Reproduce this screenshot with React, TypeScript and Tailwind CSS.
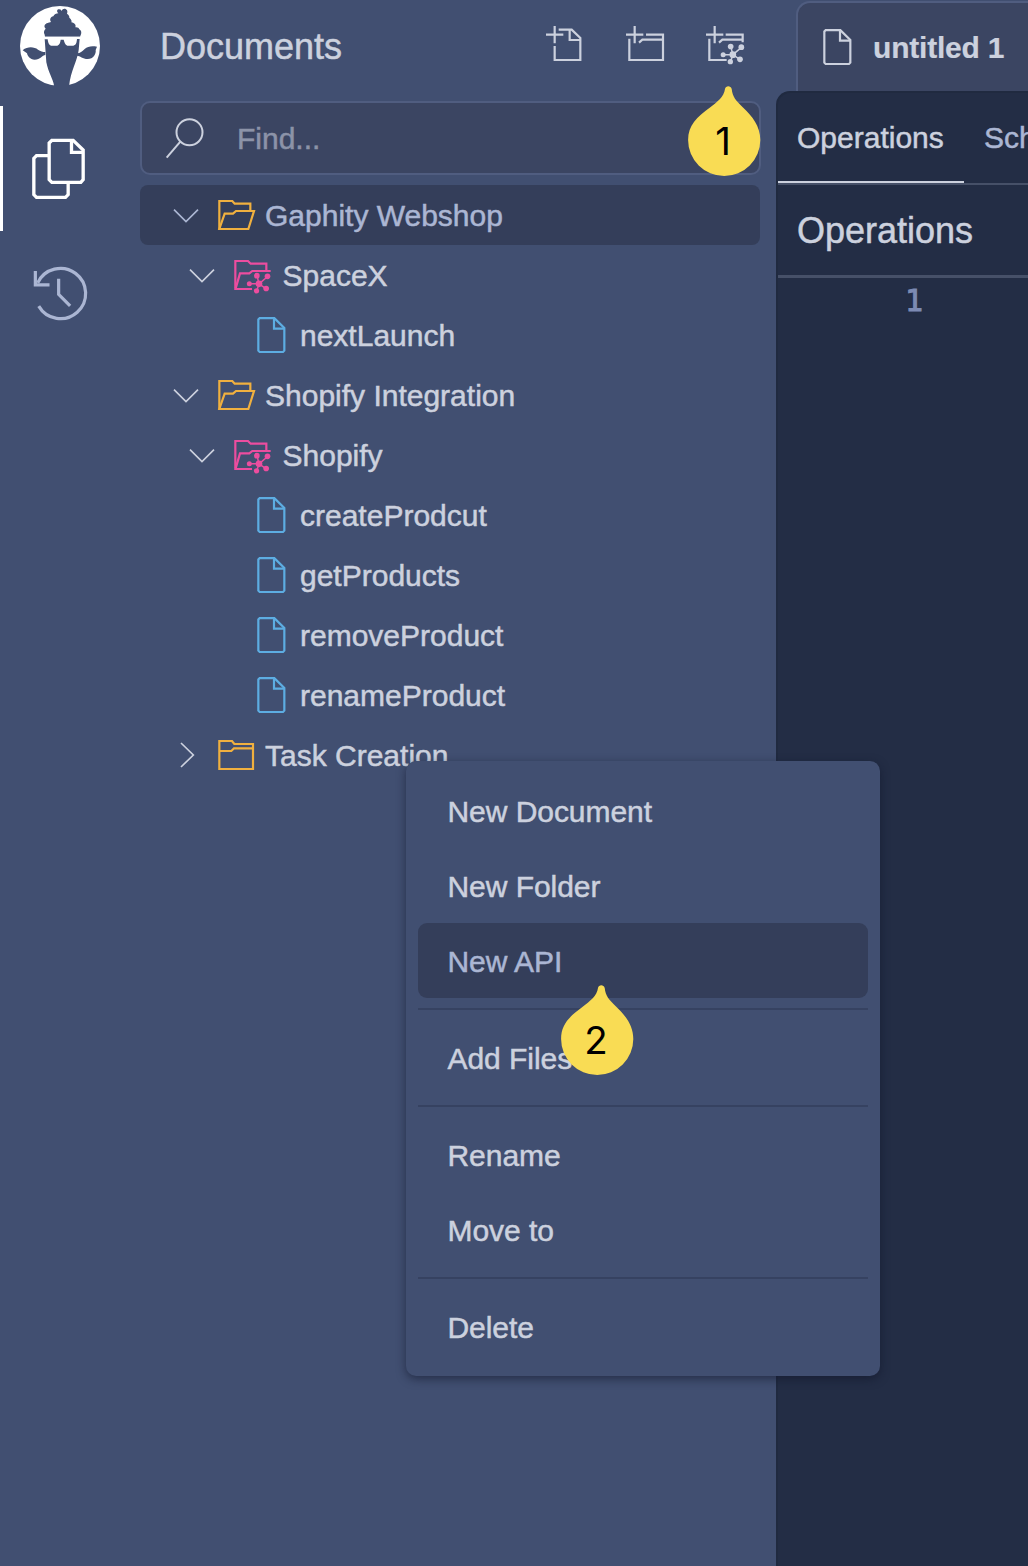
import type { ReactNode } from "react";

const NODES_LINES = "M0 0L-6 -24M0 0L26 -22M0 0H-28M0 0L-7 22M0 0L22 15";

// Hub with five satellites that marks an API folder
function Network({ x, y }: { x: number; y: number }) {
  return (
    <g transform={`translate(${x} ${y})`}>
      <path d={NODES_LINES} strokeWidth="4.5" />
      <g fill="currentColor" stroke="none">
        <circle r="10" />
        <circle cx="-6.5" cy="-24.5" r="8.5" />
        <circle cx="25.5" cy="-22.5" r="8.5" />
        <circle cx="-29" cy="0" r="7.5" />
        <circle cx="-7.5" cy="21" r="8" />
        <circle cx="21.5" cy="14" r="8.5" />
      </g>
    </g>
  );
}

function Icon({ box, className, width = 6.6, children }: { box: string; className: string; width?: number; children: ReactNode }) {
  return (
    <svg viewBox={box} className={`block shrink-0 overflow-visible ${className}`} fill="none" stroke="currentColor" strokeWidth={width}>
      {children}
    </svg>
  );
}

function Logo() {
  return (
    <svg viewBox="60 18 240 240" className="ml-[20px] mt-[6px] block h-[80px] w-[80px]">
      <clipPath id="disc">
        <circle cx="180" cy="138" r="122" />
      </clipPath>
      <circle cx="180" cy="138" r="120" fill="#fff" />
      <g fill="#414f71" clipPath="url(#disc)">
        <path d="M134 104C130 97 132 90 137 86C130 80 134 71 143 69C142 70 143 68 153 66C148 59 151 51 160 49C162 43 169 41 175 40C168 34 172 27 178 28C182 28 184 31 185 33C187 27 192 25 197 27C203 30 203 36 201 41C207 45 208 48 208 53C214 58 216 63 214 67C224 69 229 75 226 82C232 81 237 84 238 88C244 92 245 98 243 103L240 110H135Z" />
        <path d="M134 116H239L236 150C233 181 210 216 207 262H163C160 236 146 222 139 187Z" />
        <path d="M68 151C84 138 103 141 114 149C122 154 128 156 136 156V165C127 166 121 179 104 179C90 179 83 169 81 160Z" />
        <path d="M291 140C275 137 263 139 254 147C246 154 241 160 231 160V167C240 167 248 177 263 177C280 177 289 162 287 150Z" />
      </g>
      <path d="M133 110H241V117H231C230 127 229 135 220 137H202C195 134 193 126 191 119H182C181 127 179 134 172 137H153C146 135 144 126 143 118H133Z" fill="#fff" />
    </svg>
  );
}

function FileIcon({ className }: { className: string }) {
  return (
    <Icon box="291 381 87 108" className={`h-[36px] w-[29px] ${className}`}>
      <path d="M299 384.500H343L373 414V482L369 486H299L295 482V388.500Z" />
      <path d="M342 386V416H372" />
    </Icon>
  );
}

function FolderOpen() {
  return (
    <Icon box="264 330 111 90" className="h-[30px] w-[37px] text-[#f0b03f]">
      <path d="M268 417V333H307L314 341H361V362" />
      <path d="M268 417L284 371H309L318 363H372L355 417Z" />
    </Icon>
  );
}

function FolderClosed() {
  return (
    <Icon box="174 30 111 90" className="h-[30px] w-[37px] text-[#f0b03f]">
      <path d="M178 33H216L223 42H279V117H178Z" />
      <path d="M178 63H214L222 55H279" />
    </Icon>
  );
}

function FolderApi() {
  return (
    <Icon box="222 210 111 90" className="h-[30px] w-[37px] text-[#ec4d9f]">
      <path d="M276 297H226V213H264L272 221H319V242" />
      <path d="M227 295L240 250H268L277 243H332" />
      <Network x={297} y={281.5} />
    </Icon>
  );
}

function Chevron({ open }: { open: boolean }) {
  return (
    <Icon box="0 0 72 72" width={5} className="h-[24px] w-[24px]">
      <path d={open ? "M0 20L36 56L72 20" : "M21 0L58 36L21 72"} />
    </Icon>
  );
}

type Row = { label: string; kind: "open" | "closed" | "api" | "file"; selected?: boolean };

const rows: Row[] = [
  { label: "Gaphity Webshop", kind: "open", selected: true },
  { label: "SpaceX", kind: "api" },
  { label: "nextLaunch", kind: "file" },
  { label: "Shopify Integration", kind: "open" },
  { label: "Shopify", kind: "api" },
  { label: "createProdcut", kind: "file" },
  { label: "getProducts", kind: "file" },
  { label: "removeProduct", kind: "file" },
  { label: "renameProduct", kind: "file" },
  { label: "Task Creation", kind: "closed" },
];

function TreeRow({ label, kind, selected }: Row) {
  const indent = kind === "file" ? "pl-[117px]" : kind === "api" ? "pl-[50px]" : "pl-[34px]";
  return (
    <div className={`flex h-[60px] items-center rounded-lg ${indent} ${selected ? "bg-[#343e5a] text-[#abb6d3]" : ""}`}>
      {kind !== "file" && (
        <div className="mr-5">
          <Chevron open={kind !== "closed"} />
        </div>
      )}
      {kind === "open" && <FolderOpen />}
      {kind === "closed" && <FolderClosed />}
      {kind === "api" && <FolderApi />}
      {kind === "file" && <FileIcon className="text-[#5dade2]" />}
      <span className={`whitespace-nowrap pt-[2px] leading-9 ${kind === "file" ? "ml-[14px]" : kind === "api" ? "ml-[11.5px]" : "ml-[10px]"}`}>{label}</span>
    </div>
  );
}

function Pin({ n, className }: { n: number; className: string }) {
  return (
    <div className={`absolute flex h-[92px] w-[74px] justify-center ${className}`}>
      <svg viewBox="0 0 74 92" className="absolute inset-0 h-full w-full">
        <path d="M38 4C38.700 .2 43.800 .2 44.700 4C45.500 12 49 15.500 56 22.500C65 31 73.300 41 73.300 55A36.100 36.100 0 1 1 1.100 55C1.100 40 10 32 23 22.500C30 17 37 12 38 4Z" fill="#f9dc54" />
      </svg>
      <span className="relative mt-[33px] pr-[2px] font-[Inter,sans-serif] text-[38.5px] leading-[46px] text-black [-webkit-text-stroke:0px]">{n}</span>
    </div>
  );
}

function MenuItem({ label, active }: { label: string; active?: boolean }) {
  return (
    <div className={`flex h-[75px] items-center rounded-[9px] pl-[29.5px] pt-[2px] tracking-[-0.05px] ${active ? "bg-[#343e5a] text-[#abb6d3]" : ""}`}>{label}</div>
  );
}

function Separator() {
  return <div className="my-[10px] h-[2px] bg-[#364261]" />;
}

export default function App() {
  return (
    <div className="relative flex h-[1566px] w-[1028px] overflow-hidden bg-[#414f71] font-['Liberation_Sans',Arial,sans-serif] text-[30px] leading-9 text-[#ccd1de] [-webkit-text-stroke:0.5px]">
      <nav className="flex w-[140px] shrink-0 flex-col">
        <Logo />
        <div className="mt-5 flex h-[125px] items-center border-l-[3px] border-white pl-[29px] text-white">
          <Icon box="97 84 158 180" width={10} className="h-[60px] w-[53px]">
            <path d="M148 134H110L102 142V251L110 259H197L205 251V214" />
            <path d="M156 88H220L250 117V206L243 214H156L148 206V96Z" />
            <path d="M215 90V124H250" />
          </Icon>
        </div>
        <div className="flex h-[125px] items-center pl-[34px] pt-[2px] text-[#abb6d3]">
          <Icon box="102 474 157 157" width={9.5} className="h-[53px] w-[53px]">
            <path d="M113 518A74.500 74.500 0 1 1 116 587" />
            <path d="M106 483V524H148M175 506V552L209 586" />
          </Icon>
        </div>
      </nav>

      <aside className="flex w-[621px] shrink-0 flex-col">
        <header className="flex h-[101px] items-start justify-between pl-5">
          <h1 className="mt-[27px] text-[36px] leading-10">Documents</h1>
          <div className="mr-[15px] mt-[25px] flex gap-[40px]">
            <Icon box="48 45 120 120" className="h-[40px] w-[40px]">
              <path d="M74 48V100M48 74H100" />
              <path d="M74 108V150H151V84L125 59H86M119 60V90H151" />
            </Icon>
            <Icon box="288 45 120 120" className="h-[40px] w-[40px]">
              <path d="M314 48V100M288 74H340" />
              <path d="M298 86V150H399V74H348M327 98L337 89H399" />
            </Icon>
            <Icon box="528 45 120 120" className="h-[40px] w-[40px]">
              <path d="M554 48V100M528 74H580" />
              <path d="M590 150H538V86M587 74H638V97M567 98L577 89H638" />
              <Network x={608.5} y={134} />
            </Icon>
          </div>
        </header>
        <div className="flex h-[74px] shrink-0 items-center rounded-[10px] border-2 border-[#505d80] bg-[#3b4562] pl-[24px]">
          <Icon box="108 82 114 120" width={6} className="h-[40px] w-[38px]">
            <circle cx="178.500" cy="125" r="39" />
            <path d="M151 153L110 201" />
          </Icon>
          <span className="ml-[33px] pt-[2px] text-[#8c93a8]">Find...</span>
        </div>
        <div className="mr-px mt-[10px] flex flex-col">
          {rows.map((r) => (
            <TreeRow key={r.label} {...r} />
          ))}
        </div>
      </aside>

      <main className="ml-[15px] flex w-[252px] shrink-0 flex-col">
        <div className="ml-5 mt-[1px] flex h-[90px] w-[260px] items-center rounded-tl-[14px] border-l-2 border-t-2 border-[#505d80] bg-[#3b4562] pl-[25px]">
          <FileIcon className="" />
          <span className="ml-[21px] whitespace-nowrap pt-[2px] font-bold tracking-[-0.2px] [-webkit-text-stroke:0.2px]">untitled 1</span>
        </div>
        <section className="flex w-[270px] flex-1 flex-col rounded-tl-[14px] border-l-2 border-t-2 border-[#202a40] bg-[#232d45]">
          <div className="flex h-[92px] border-b-2 border-[#465068]">
            <div className="flex h-[90px] w-[186px] shrink-0 items-center border-b-2 border-[#ccd1de] pl-[19px] pt-[1px]">Operations</div>
            <div className="flex h-[90px] items-center pb-[1px] pl-5 text-[#abb6d3]">Schema</div>
          </div>
          <div className="flex h-[93px] items-center border-b-[3px] border-[#465068] pl-[19px] pt-[2px] text-[36px]">Operations</div>
          <div className="pl-[127px] pt-[5px] font-['DejaVu_Sans_Mono',monospace] text-[30px] leading-9 text-[#7c8ab3] [-webkit-text-stroke:1px]">1</div>
        </section>
      </main>

      <div className="absolute left-[406px] top-[761px] h-[615px] w-[474px] rounded-[10px] bg-[#414f71] p-3 shadow-[0_3px_10px_rgba(15,20,40,0.55)]">
        <MenuItem label="New Document" />
        <MenuItem label="New Folder" />
        <MenuItem label="New API" active />
        <Separator />
        <MenuItem label="Add Files" />
        <Separator />
        <MenuItem label="Rename" />
        <MenuItem label="Move to" />
        <Separator />
        <MenuItem label="Delete" />
      </div>

      <Pin n={1} className="left-[687px] top-[85px]" />
      <Pin n={2} className="left-[560px] top-[984px]" />
    </div>
  );
}
